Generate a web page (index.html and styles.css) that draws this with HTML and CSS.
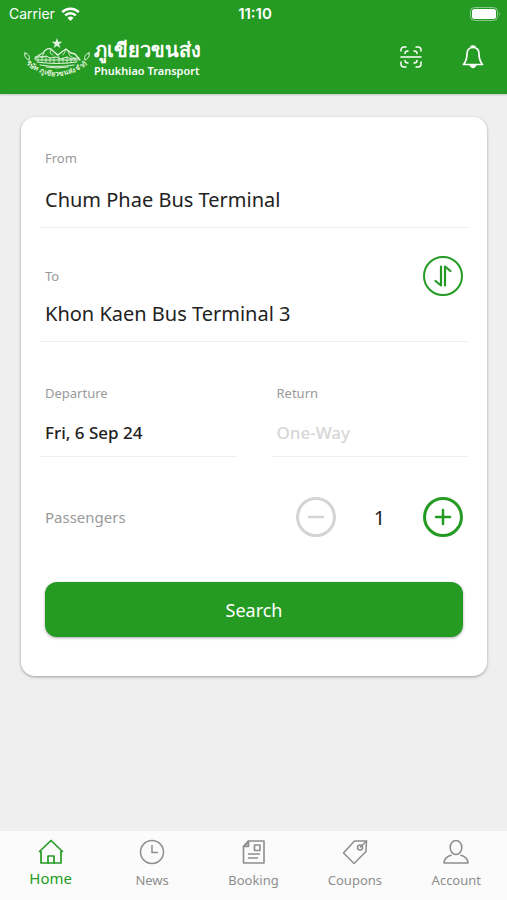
FILE: index.html
```html
<!DOCTYPE html>
<html lang="en">
  <head>
    <meta charset="UTF-8" />
    <meta name="viewport" content="width=device-width, initial-scale=1.0" />
    <title>Phukhiao Transport</title>
    <link rel="stylesheet" href="styles.css">
  </head>
  <body>
    <header class="header">
      <div class="status-bar">
        <div class="carrier">
          <span>Carrier</span>
          <svg width="19" height="14" viewBox="0 0 19 14" fill="none" stroke="#fff" stroke-width="2.6">
            <path d="M1.2 5.2a11.7 11.7 0 0 1 16.6 0" />
            <path d="M4.2 8.4a7.5 7.5 0 0 1 10.6 0" />
            <path d="M9.5 14 6.5 10.9a4.3 4.3 0 0 1 6 0z" fill="#fff" stroke="none" />
          </svg>
        </div>
        <span class="clock">11:10</span>
        <div class="battery">
          <svg width="31" height="14" viewBox="0 0 31 14">
            <rect x="0.5" y="0.5" width="27" height="13" rx="4" fill="none" stroke="#fff" stroke-opacity="0.45" />
            <rect x="2" y="2" width="24" height="10" rx="2.5" fill="#fff" />
            <path d="M29 4.8q1.8 2.2 0 4.4z" fill="#fff" fill-opacity="0.5" />
          </svg>
        </div>
      </div>
      <div class="title-bar">
        <a href="#" class="brand">
          <svg class="emblem" width="66" height="42" viewBox="0 0 66 42" fill="none" stroke="#e4f5df" stroke-linecap="round" stroke-linejoin="round">
            <path d="M33 2l1.3 3.8h4l-3.2 2.4 1.2 3.9-3.3-2.4-3.3 2.4 1.2-3.9-3.2-2.4h4z" fill="#e4f5df" stroke="none" />
            <path d="M11 23c3-4 5-5 8-6 2-3 5-5 8-4l3 3 4 3 5-4 3-2 5 4 4 1 5 6" stroke-width="1.3" />
            <path d="M20 17l-2 4M27 13l-1 4 3 2M31 17l4 4M42 14l-3 5M44 15l2 5 4 2M15 20l5 1" stroke-width="0.8" />
            <path d="M11 21h8l3-1 4 2 6-1 5 2 6-2 4 2 7-1M12 24h42M13 26q20 3 40 0M16 29q17 3 34 0M22 31q11 2 22 0" stroke-width="1" />
            <path d="M14 22v3M18 21v4M22 20v6M26 22v4M30 21v6M35 22v5M39 22v4M43 21v6M47 22v4M51 22v3" stroke-width="0.8" />
            <path d="M1 17c4 1 5 4 4 7-3-1-5-4-4-7zM65 17c-4 1-5 4-4 7 3-1 5-4 4-7z" stroke-width="1" />
            <path id="ribbon" d="M3 29Q33 51 63 29" stroke="none" />
            <text class="emblem-text" text-anchor="middle"><textPath href="#ribbon" startOffset="50%">บริษัท ภูเขียวขนส่ง จำกัด</textPath></text>
          </svg>
          <span class="brand-name">
            <span class="brand-thai" lang="th">ภูเขียวขนส่ง</span>
            <span class="brand-latin">Phukhiao Transport</span>
          </span>
        </a>
        <div class="actions">
          <button type="button" class="icon-button" aria-label="Scan">
            <svg width="22" height="22" viewBox="0 0 22 22" fill="none" stroke="#fff" stroke-width="1.5" stroke-linecap="round">
              <path d="M1 5V4a3 3 0 0 1 3-3h2M16 1h2a3 3 0 0 1 3 3v1M21 16v2a3 3 0 0 1-3 3h-2M6 21H4a3 3 0 0 1-3-3v-2" />
              <path d="M5 7.500q0-2.500 3-2.500M14 5q3 0 3 2.500M17 14.500q0 2.500-3 2.500M8 17q-3 0-3-2.500M1 11h20" />
            </svg>
          </button>
          <button type="button" class="icon-button" aria-label="Notifications">
            <svg width="22" height="24" viewBox="0 0 22 24" fill="none" stroke="#fff" stroke-width="1.700" stroke-linejoin="round">
              <path d="M11 2.500c-4 0-6 2.700-6 6.500 0 6-1.500 8-3.500 10.500h19C18.500 17 17 15 17 9c0-3.800-2-6.500-6-6.500z" />
              <path d="M9 2.500a2 1.500 0 0 1 4 0M8.500 20.500q2.500 4 5 0z" fill="#fff" />
            </svg>
          </button>
        </div>
      </div>
    </header>

    <main class="content">
      <form class="search-card">
        <div class="field">
          <label for="from" class="field-label">From</label>
          <input type="text" id="from" class="field-input station" value="Chum Phae Bus Terminal" />
        </div>
        <div class="field field-to">
          <div class="label-row">
            <label for="to" class="field-label">To</label>
            <button type="button" class="round-button swap" aria-label="Swap stations">
              <svg width="18" height="22" viewBox="0 0 18 22" fill="none" stroke="#259b24" stroke-width="2.200" stroke-linecap="round" stroke-linejoin="round">
                <path d="M7 1.500v19L1.500 16" />
                <path d="M11 20.500v-19L16.500 6" />
              </svg>
            </button>
          </div>
          <input type="text" id="to" class="field-input station" value="Khon Kaen Bus Terminal 3" />
        </div>
        <div class="dates">
          <div class="field">
            <label for="departure" class="field-label">Departure</label>
            <input type="text" id="departure" class="field-input date" value="Fri, 6 Sep 24" />
          </div>
          <div class="field">
            <label for="return" class="field-label">Return</label>
            <input type="text" id="return" class="field-input date" placeholder="One-Way" />
          </div>
        </div>
        <div class="passengers">
          <label for="count" class="passengers-label">Passengers</label>
          <div class="stepper">
            <button type="button" class="round-button minus" aria-label="Remove passenger" disabled>
              <svg width="18" height="18" viewBox="0 0 18 18" fill="none" stroke="currentColor" stroke-width="2.500" stroke-linecap="round">
                <path d="M2 9h14" />
              </svg>
            </button>
            <output id="count" class="count">1</output>
            <button type="button" class="round-button plus" aria-label="Add passenger">
              <svg width="18" height="18" viewBox="0 0 18 18" fill="none" stroke="currentColor" stroke-width="2.500" stroke-linecap="round">
                <path d="M2 9h14M9 2v14" />
              </svg>
            </button>
          </div>
        </div>
        <button type="submit" class="search-button">Search</button>
      </form>
    </main>

    <nav class="tab-bar">
      <a href="#" class="tab active">
        <svg width="26" height="26" viewBox="0 0 26 26" fill="none" stroke="currentColor" stroke-width="1.700" stroke-linecap="round" stroke-linejoin="round">
          <path d="M3 12.500H1.500L13 1.500l11.500 11H23V24H3z" />
          <path d="M10 24v-7h6v7" />
        </svg>
        <span>Home</span>
      </a>
      <a href="#" class="tab">
        <svg width="26" height="26" viewBox="0 0 26 26" fill="none" stroke="currentColor" stroke-width="1.500">
          <circle cx="13" cy="13" r="11.500" />
          <path d="M13 6v7.500h6" />
        </svg>
        <span>News</span>
      </a>
      <a href="#" class="tab">
        <svg width="26" height="26" viewBox="0 0 26 26" fill="none" stroke="currentColor" stroke-width="1.600" stroke-linejoin="round">
          <path d="M8.500 2H24v22H3.500V7.500z" />
          <path d="M8.500 2v5.500h-5z" fill="currentColor" fill-opacity="0.5" />
          <path d="M14.500 6h5.500v5.500h-5.500zM8 15h12M8 19h10" />
        </svg>
        <span>Booking</span>
      </a>
      <a href="#" class="tab">
        <svg width="26" height="26" viewBox="0 0 26 26" fill="none" stroke="currentColor" stroke-width="1.500" stroke-linejoin="round">
          <path d="M12.500 2H24.500L24 12.500 12 24.500 1.500 14z" />
          <circle cx="18" cy="8.500" r="2.500" />
          <path d="M18 8.500 25 1.500" />
        </svg>
        <span>Coupons</span>
      </a>
      <a href="#" class="tab">
        <svg width="26" height="26" viewBox="0 0 26 26" fill="none" stroke="currentColor" stroke-width="1.600" stroke-linejoin="round">
          <ellipse cx="13" cy="8.500" rx="5.800" ry="7" />
          <path d="M8.500 16C4 17.500 1 19.500 1 24h24c0-4.500-3-6.500-7.500-8" />
        </svg>
        <span>Account</span>
      </a>
    </nav>
  </body>
</html>
```
FILE: styles.css
```css
* {
  box-sizing: border-box;
}

body {
  margin: 0;
  min-height: 100vh;
  display: flex;
  flex-direction: column;
  background: #efefef;
  color: #222;
  font-family: "Noto Sans", "Open Sans", sans-serif;
}

button,
input {
  font-family: inherit;
  padding: 0;
  border: none;
  background: none;
}

button {
  cursor: pointer;
}

svg {
  display: block;
}

.header {
  background: #259b24;
  color: #fff;
  box-shadow: 0 1px 2px rgba(0, 0, 0, 0.2);
}

.status-bar {
  display: grid;
  grid-template-columns: 1fr auto 1fr;
  align-items: center;
  height: 27px;
  padding: 0 6px 0 9px;
  font-family: Inter, sans-serif;
  font-size: 14px;
}

.carrier {
  display: flex;
  align-items: center;
  gap: 6px;
}

.clock {
  font-size: 15px;
  font-weight: 600;
}

.battery {
  justify-self: end;
}

.title-bar {
  display: flex;
  justify-content: space-between;
  align-items: center;
  height: 67px;
  padding: 0 23px 8px 24px;
}

.brand {
  display: flex;
  align-items: center;
  gap: 4px;
  color: #fff;
  text-decoration: none;
}

.emblem {
  overflow: visible;
}

.emblem-text {
  fill: #e4f5df;
  stroke: none;
  font-size: 7px;
  font-weight: 700;
}

.brand-name {
  display: flex;
  flex-direction: column;
  gap: 2px;
}

.brand-thai {
  font-size: 20px;
  font-weight: 700;
  line-height: 26px;
}

.brand-latin {
  font-size: 11px;
  font-weight: 600;
  line-height: 12px;
}

.actions {
  display: flex;
  align-items: center;
  gap: 40px;
}

.content {
  flex: 1;
  padding: 23px 20px 23px 21px;
}

.search-card {
  padding: 32px 19px 39px;
  border-radius: 14px;
  background: #fff;
  box-shadow: 0 1px 3px rgba(0, 0, 0, 0.35);
}

.field {
  padding: 0 5px 14px;
  border-bottom: 1px solid #efefef;
}

.field-label {
  display: block;
  font-size: 13px;
  line-height: 18px;
  color: #999;
}

.field-input {
  display: block;
  width: 100%;
  height: 28px;
  color: #222;
  outline: none;
}

.station {
  font-size: 20px;
}

.field > .field-label + .station {
  margin-top: 18px;
}

.field-to {
  margin-top: 28px;
}

.label-row {
  display: flex;
  justify-content: space-between;
  align-items: center;
  margin-bottom: 3px;
}

.dates {
  display: grid;
  grid-template-columns: 1fr 1fr;
  gap: 35px;
  margin-top: 42px;
}

.dates .field {
  padding-bottom: 10px;
}

.date {
  margin-top: 16px;
  font-size: 17px;
  font-weight: 500;
}

.date::placeholder {
  color: #d6d6d6;
  opacity: 1;
}

.round-button {
  display: flex;
  justify-content: center;
  align-items: center;
  width: 40px;
  height: 40px;
  border: 3px solid #259b24;
  border-radius: 50%;
  color: #259b24;
}

.swap {
  border-width: 2px;
}

.minus {
  border-color: #d4d4d4;
  color: #d4d4d4;
}

.passengers {
  display: flex;
  justify-content: space-between;
  align-items: center;
  margin-top: 40px;
  padding: 0 5px;
}

.passengers-label {
  font-size: 15px;
  color: #999;
}

.stepper {
  display: flex;
  align-items: center;
}

.count {
  width: 87px;
  font-size: 20px;
  text-align: center;
}

.search-button {
  display: block;
  width: calc(100% - 10px);
  height: 55px;
  margin: 45px 5px 0;
  border-radius: 12px;
  background: #259b24;
  color: #fff;
  font-size: 18px;
  box-shadow: 0 1px 3px rgba(0, 0, 0, 0.35);
}

.tab-bar {
  display: grid;
  grid-template-columns: repeat(5, 1fr);
  height: 69px;
  padding-top: 8px;
  background: #fbfbfb;
}

.tab {
  display: flex;
  flex-direction: column;
  align-items: center;
  gap: 6px;
  color: #8e8e8e;
  font-size: 13px;
  line-height: 18px;
  text-decoration: none;
}

.tab.active {
  gap: 4px;
  color: #259b24;
  font-size: 15px;
}
```
